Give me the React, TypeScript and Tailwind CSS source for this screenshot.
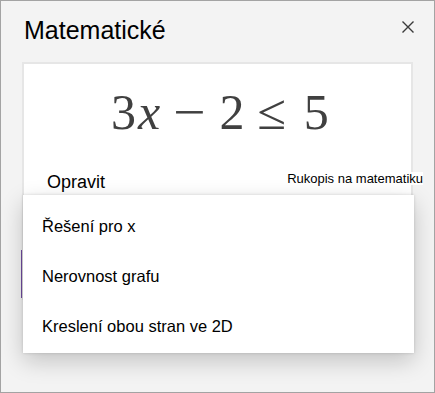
const menuItems = ["Řešení pro x", "Nerovnost grafu", "Kreslení obou stran ve 2D"];

export default function App() {
  return (
    <div className="relative h-[393px] w-[435px] overflow-hidden border border-[#a3a3a3] bg-[#f3f3f3] px-[21px] font-['Liberation_Sans',Arial,sans-serif] text-black">
      {/* header */}
      <div className="flex items-start justify-between pt-[17px]">
        <h1 className="pl-[2px] text-[25px] leading-none">Matematické</h1>
        <svg viewBox="0 0 12 12" className="mr-[-1px] mt-[3px] h-[12px] w-[12px] text-[#3a3a3a]" fill="none" stroke="currentColor" strokeWidth={1.4}>
          <path d="M0.5 0.5 11.5 11.5M11.5 0.5 0.5 11.5" />
        </svg>
      </div>

      {/* card */}
      <div className="mt-[19px] h-[238px] border-2 border-[#e6e6e6] bg-white">
        <div className="flex items-center pl-[87px] pt-[23px] font-['Liberation_Serif',serif] text-[50px] leading-none text-[#404040]">
          <span>3</span>
          <span className="ml-[2px] italic">x</span>
          <span className="ml-[15px] scale-x-[1.15]">−</span>
          <span className="ml-[16px]">2</span>
          <span className="ml-[14px] scale-x-[1.05]">≤</span>
          <span className="ml-[18px]">5</span>
        </div>
        <div className="mt-[36px] flex items-start pl-[23px]">
          <span className="text-[18px] leading-none">Opravit</span>
          <span className="ml-auto mr-[-12px] mt-[-1px] whitespace-nowrap bg-white text-[13px] leading-none">
            Rukopis na matematiku
          </span>
        </div>
      </div>

      <div className="absolute left-[20px] top-[249px] h-[48px] w-px bg-[#6f4aa0]" />

      {/* dropdown menu */}
      <div className="absolute left-[22px] top-[194px] w-[391px] bg-white pt-[6px] pb-[2px] shadow-[0_8px_22px_rgba(0,0,0,0.2),0_0_3px_rgba(0,0,0,0.15)]">
        {menuItems.map((item) => (
          <div key={item} className="flex h-[50px] items-center pl-[19px] text-[16.5px] leading-none">
            {item}
          </div>
        ))}
      </div>
    </div>
  );
}
